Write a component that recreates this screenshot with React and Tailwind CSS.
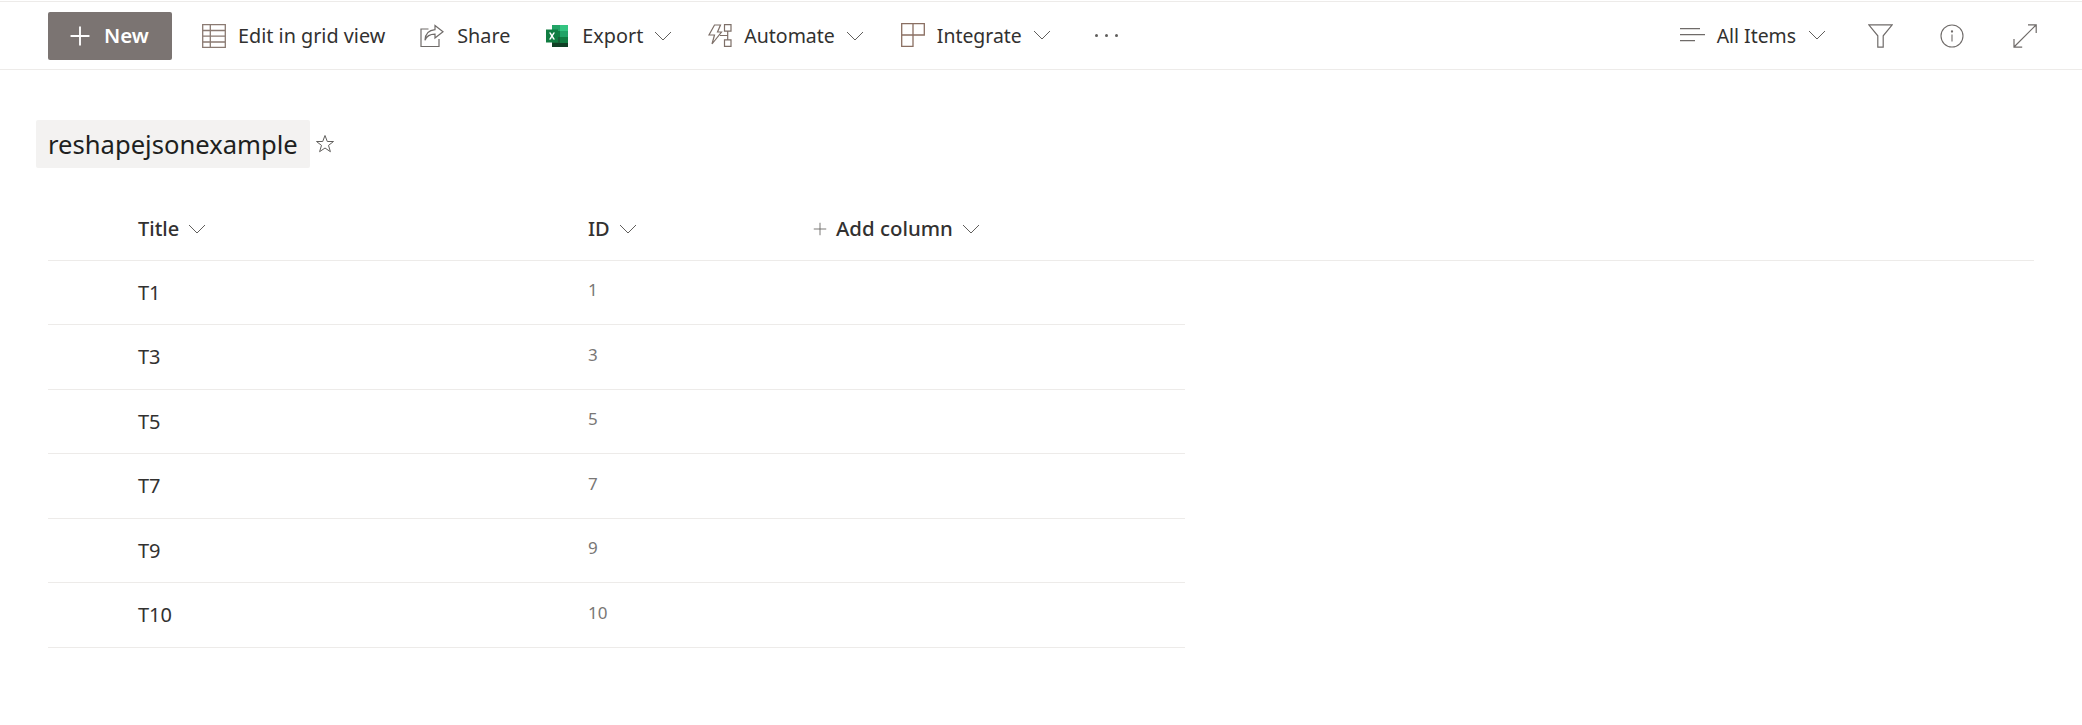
import React from "react";
import { Plus } from "lucide-react";

const Chevron = ({ className = "" }) => (
  <svg viewBox="0 0 18 10" className={`w-[18px] h-[10px] ${className}`} fill="none" stroke="#605e5c" strokeWidth="1">
    <path d="M1 1l8 8 8-8" />
  </svg>
);

const GridIcon = () => (
  <svg viewBox="0 0 24 24" className="w-6 h-6" fill="none" stroke="#8a7a72" strokeWidth="1.3">
    <path d="M.7.7h22.6v22.6H.7zM.7 6.5h22.6M.7 12.2h22.6M.7 18h22.6M8.3.7v22.6" />
  </svg>
);

const ShareIcon = () => (
  <svg viewBox="0 0 24 24" className="w-6 h-6" fill="none" stroke="#6f6b69" strokeWidth="1.2">
    <path d="M8.5 5H1v17.5h18V15" />
    <path d="M15 1.5l8 6.3-8 6.2V10.2c-5.5 0-8.5 2.2-10 6 .4-6.5 4-10 10-10.5z" />
  </svg>
);

const ExcelIcon = () => (
  <svg viewBox="0 0 22 22" className="w-[22px] h-[22px]">
    <path d="M6 0h16v6H6z" fill="#21a366" />
    <path d="M14 0h8v6h-8z" fill="#33c481" />
    <path d="M6 6h8v6H6z" fill="#107c41" />
    <path d="M14 6h8v6h-8z" fill="#21a366" />
    <path d="M6 12h8v6H6z" fill="#185c37" />
    <path d="M14 12h8v6h-8z" fill="#107c41" />
    <path d="M6 18h16v4H6z" fill="#103f25" />
    <rect x="0" y="4.5" width="12" height="13" fill="#107c41" />
    <path d="M3 7.5h1.800l1.200 2.300 1.300-2.300H9l-2.100 3.500L9 14.500H7.200L6 12.200l-1.200 2.300H3l2.100-3.500z" fill="#fff" />
  </svg>
);

const AutomateIcon = () => (
  <svg viewBox="0 0 24 24" className="w-6 h-6" fill="none" stroke="#7d6f68" strokeWidth="1.2">
    <path d="M6.5 1h6l-3 7h4L4 20l2.500-9H1z" />
    <path d="M16.500.7h6.500v6.500h-6.500zM16.500 15.800h6.500v6.500h-6.500zM19.700 7.200v8.600M12 11.500h7.700" />
  </svg>
);

const IntegrateIcon = () => (
  <svg viewBox="0 0 24 24" className="w-6 h-6" fill="none" stroke="#8a6f62" strokeWidth="1.3">
    <path d="M.7.7h22.600v11.300H12v11.300H.7zM12 .7V12M.7 12H12" />
  </svg>
);

const ListIcon = () => (
  <svg viewBox="0 0 25 14" className="w-[25px] h-[14px]" fill="none" stroke="#6f6b69" strokeWidth="1.2">
    <path d="M0 .6h20M0 6.600h25M0 12.600h15" />
  </svg>
);

const FilterIcon = () => (
  <svg viewBox="0 0 25 24" className="w-[25px] h-6" fill="none" stroke="#6f6b69" strokeWidth="1.2">
    <path d="M.8.8h23.400l-9 11v11.400H9.800V11.800z" />
  </svg>
);

const InfoIcon = () => (
  <svg viewBox="0 0 24 24" className="w-6 h-6" fill="none" stroke="#6f6b69" strokeWidth="1.1">
    <circle cx="12" cy="12" r="11" />
    <path d="M12 10.500v7" />
    <circle cx="12" cy="7.500" r=".6" fill="#6f6b69" />
  </svg>
);

const ExpandIcon = () => (
  <svg viewBox="0 0 24 24" className="w-6 h-6" fill="none" stroke="#6f6b69" strokeWidth="1.2">
    <path d="M15 .8h8.200V9M23 1L1 23M1 15v8.200h8.200" />
  </svg>
);

const Star = () => (
  <svg viewBox="0 0 20 20" className="w-5 h-5" fill="none" stroke="#605e5c" strokeWidth="1">
    <path d="M10 1.500l2.300 6h6.200l-5 3.900 1.900 6.300L10 14l-5.400 3.700 1.900-6.300-5-3.900h6.200z" />
  </svg>
);

const rows = [
  ["T1", "1"],
  ["T3", "3"],
  ["T5", "5"],
  ["T7", "7"],
  ["T9", "9"],
  ["T10", "10"],
];

export default function App() {
  return (
    <div className="h-[725px] bg-white text-[#323130] font-['Noto_Sans','Open_Sans',sans-serif] overflow-hidden">
      <div className="h-[69px] mt-[1px] border-y border-[#edebe9] flex items-center pl-[48px] pr-[45px] text-[19.8px]">
        <button className="w-[124px] h-[48px] bg-[#7b7472] rounded-[2px] text-white font-semibold flex items-center pl-[17px] gap-[9px]">
          <Plus size={30} strokeWidth={1.5} />
          <span className="text-[20.5px]">New</span>
        </button>
        <div className="ml-[30px] flex items-center gap-[12px]"><GridIcon /><span>Edit in grid view</span></div>
        <div className="ml-[35px] flex items-center gap-[13px]"><ShareIcon /><span>Share</span></div>
        <div className="ml-[36px] flex items-center gap-[14px]"><ExcelIcon /><span>Export</span><Chevron className="-ml-[3px]" /></div>
        <div className="ml-[36px] flex items-center gap-[12px]"><AutomateIcon /><span className="text-[19.5px]">Automate</span><Chevron className="-ml-[1px]" /></div>
        <div className="ml-[37px] flex items-center gap-[12px]"><IntegrateIcon /><span className="text-[19.4px]">Integrate</span><Chevron className="-ml-[1px]" /></div>
        <div className="ml-[44px] flex items-center gap-[7px]">
          <span className="w-[3px] h-[3px] rounded-full bg-[#605e5c]" />
          <span className="w-[3px] h-[3px] rounded-full bg-[#605e5c]" />
          <span className="w-[3px] h-[3px] rounded-full bg-[#605e5c]" />
        </div>
        <div className="ml-auto flex items-center gap-[12px]"><ListIcon /><span className="text-[19.4px]">All Items</span><Chevron /></div>
        <div className="ml-[42px]"><FilterIcon /></div>
        <div className="ml-[47px]"><InfoIcon /></div>
        <div className="ml-[49px]"><ExpandIcon /></div>
      </div>

      <div className="mt-[50px] ml-[36px] flex items-center">
        <h1 className="h-[48px] px-[12px] bg-[#f3f2f1] rounded-[2px] text-[25.6px] leading-[50px] font-normal text-[#201f1e]">reshapejsonexample</h1>
        <span className="ml-[5px]"><Star /></span>
      </div>

      <div className="mt-[30px] ml-[48px] w-[1986px] h-[62.6px] border-b border-[#edebe9] flex items-center text-[20px] font-medium">
        <div className="w-[540px] pl-[90px] flex items-center gap-[9px]"><span>Title</span><Chevron /></div>
        <div className="w-[222px] flex items-center gap-[9px]"><span>ID</span><Chevron /></div>
        <div className="flex items-center gap-[6px]">
          <Plus size={20} strokeWidth={1} className="text-[#605e5c]" />
          <span className="text-[20.4px] -mt-[1px]">Add column</span>
          <Chevron className="ml-[3px]" />
        </div>
      </div>

      <div className="ml-[48px] w-[1137px]">
        {rows.map(([title, id]) => (
          <div key={id} className="h-[64.5px] border-b border-[#edebe9] flex items-center">
            <div className="w-[540px] pl-[90px] text-[20px] pt-[1px]">{title}</div>
            <div className="text-[17px] text-[#797775] pb-[5px]">{id}</div>
          </div>
        ))}
      </div>
    </div>
  );
}
